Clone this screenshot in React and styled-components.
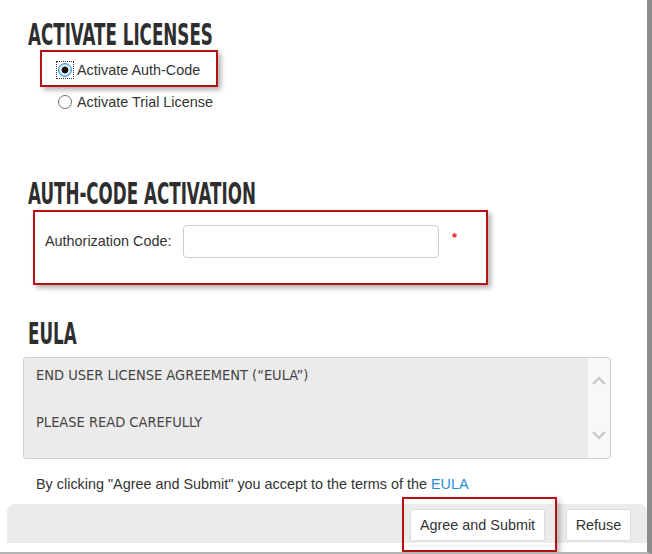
import React, { useState } from "react";
import styled, { createGlobalStyle } from "styled-components";

const GlobalStyle = createGlobalStyle`
    html, body {
        margin: 0;
        padding: 0;
        background: #ffffff;
    }
    body {
        font-family: "Liberation Sans", Arial, sans-serif;
        font-size: 14.4px;
        color: #333333;
    }
`;

const Frame = styled.div`
    box-sizing: border-box;
    width: 652px;
    height: 554px;
    border-right: 5px solid #8c8c8c;
    border-bottom: 2px solid #b4b4b4;
    background: #ffffff;
    overflow: hidden;
    display: flex;
    flex-direction: column;
`;

const Title = styled.h2`
    margin: ${(p) => p.$top || 0}px 0 0 28px;
    font-family: "Liberation Sans Narrow", "DejaVu Sans Condensed", sans-serif;
    font-weight: 700;
    font-size: 31px;
    line-height: 31px;
    height: 31px;
    color: #2e2e2e;
    text-transform: uppercase;
    white-space: nowrap;
    transform: scaleX(0.6);
    transform-origin: left center;
`;

const Highlight = styled.div`
    box-sizing: border-box;
    border: 2px solid #b80f16;
    box-shadow: 3px 3px 5px rgba(0, 0, 0, 0.3);
`;

const ModeBox = styled(Highlight)`
    width: 178px;
    height: 37px;
    margin: 0 0 0 40px;
    display: flex;
    align-items: center;
    padding: 2px 0 0 14px;
`;

const OptionRow = styled.label`
    display: flex;
    align-items: center;
    gap: 3px;
    margin: ${(p) => p.$top || 0}px 0 0 ${(p) => p.$left || 0}px;
    font-size: 14.4px;
    color: #333333;
    cursor: pointer;
`;

const RadioWrap = styled.span`
    box-sizing: border-box;
    width: 18px;
    height: 18px;
    display: flex;
    align-items: center;
    justify-content: center;
    border: 1px dotted ${(p) => (p.$focused ? "#333333" : "transparent")};
`;

const Radio = styled.input.attrs({ type: "radio" })`
    appearance: none;
    box-sizing: border-box;
    margin: 0;
    width: 14px;
    height: 14px;
    border-radius: 50%;
    border: 1px solid ${(p) => (p.checked ? "#3a95d8" : "#6f6f6f")};
    background: ${(p) =>
        p.checked
            ? "radial-gradient(circle, #111 0 3.2px, #fff 3.8px)"
            : "#fff"};
    box-shadow: ${(p) => (p.checked ? "0 0 0 1px #8cc4ee inset" : "none")};
`;

const CodeBox = styled(Highlight)`
    width: 455px;
    height: 75px;
    margin: 1px 0 0 33px;
    display: flex;
    align-items: flex-start;
    padding: 13px 0 0 10px;
`;

const FieldLabel = styled.span`
    width: 138px;
    line-height: 33px;
    font-size: 14.4px;
    color: #333333;
`;

const CodeInput = styled.input`
    box-sizing: border-box;
    width: 256px;
    height: 33px;
    border: 1px solid #cccccc;
    border-radius: 4px;
    padding: 0 8px;
    font-family: "Liberation Sans", Arial, sans-serif;
    font-size: 14px;
    outline: none;
`;

const Required = styled.span`
    margin: 6px 0 0 13px;
    color: #e0202a;
    font-size: 13px;
    font-weight: 700;
    line-height: 13px;
`;

const EulaBox = styled.div`
    box-sizing: border-box;
    width: 588px;
    height: 102px;
    margin: 8px 0 0 23px;
    display: flex;
    border: 1px solid #cfcfcf;
    border-radius: 3px;
    background: #ebebeb;
    overflow: hidden;
`;

const EulaText = styled.div`
    flex: 1;
    padding: 9px 0 0 12px;
    font-family: "Liberation Sans Narrow", "DejaVu Sans Condensed", sans-serif;
    font-size: 14.5px;
    color: #444444;

    p {
        margin: 0 0 31px 0;
        line-height: 16px;
        white-space: nowrap;
    }
`;

const ScrollTrack = styled.div`
    width: 22px;
    background: #f8f8f8;
    display: flex;
    flex-direction: column;
    align-items: center;
    justify-content: space-between;
    padding: 18px 0 18px 0;
`;

const Terms = styled.p`
    margin: 17px 0 0 36px;
    font-size: 14.4px;
    line-height: 16px;
    color: #333333;

    a {
        color: #1f8dd6;
        text-decoration: none;
    }
`;

const ActionBar = styled.div`
    box-sizing: border-box;
    height: 39px;
    margin: 12px 0 0 7px;
    padding: 0 16px 2px 0;
    background: #ebebeb;
    border-radius: 8px 8px 0 0;
    display: flex;
    align-items: flex-end;
    justify-content: flex-end;
`;

const SubmitMark = styled(Highlight)`
    margin: 0 9px -11px 0;
    padding: 10px 10px 9px 6px;
    box-shadow: 3px 3px 5px rgba(0, 0, 0, 0.25);
`;

const Button = styled.button`
    box-sizing: border-box;
    width: ${(p) => p.$w}px;
    height: 32px;
    padding: 0;
    background: #ffffff;
    border: 1px solid #dddddd;
    border-radius: 1px;
    font-family: "Liberation Sans", Arial, sans-serif;
    font-size: 14.4px;
    color: #333333;
    cursor: pointer;
`;

function Chevron({ up }) {
    return (
        <svg width="14" height="9" viewBox="0 0 14 9" aria-hidden="true">
            <path
                d={up ? "M1 8 L7 2 L13 8" : "M1 1 L7 7 L13 1"}
                fill="none"
                stroke="#c4c4c4"
                strokeWidth="2"
            />
        </svg>
    );
}

function App() {
    const [mode, setMode] = useState("auth");
    const [code, setCode] = useState("");

    return (
        <Frame>
            <GlobalStyle />
            <Title $top={19}>Activate Licenses</Title>

            <ModeBox>
                <OptionRow>
                    <RadioWrap $focused>
                        <Radio name="mode" checked={mode === "auth"} onChange={() => setMode("auth")} />
                    </RadioWrap>
                    Activate Auth-Code
                </OptionRow>
            </ModeBox>
            <OptionRow $top={6} $left={56}>
                <RadioWrap>
                    <Radio name="mode" checked={mode === "trial"} onChange={() => setMode("trial")} />
                </RadioWrap>
                Activate Trial License
            </OptionRow>

            <Title $top={67}>Auth-Code Activation</Title>
            <CodeBox>
                <FieldLabel>Authorization Code:</FieldLabel>
                <CodeInput value={code} onChange={(e) => setCode(e.target.value)} />
                <Required>*</Required>
            </CodeBox>

            <Title $top={33}>EULA</Title>
            <EulaBox>
                <EulaText>
                    <p>END USER LICENSE AGREEMENT (“EULA”)</p>
                    <p>PLEASE READ CAREFULLY</p>
                </EulaText>
                <ScrollTrack>
                    <Chevron up />
                    <Chevron />
                </ScrollTrack>
            </EulaBox>

            <Terms>
                By clicking "Agree and Submit" you accept to the terms of the <a href="#eula">EULA</a>
            </Terms>

            <ActionBar>
                <SubmitMark>
                    <Button $w={135}>Agree and Submit</Button>
                </SubmitMark>
                <Button $w={65}>Refuse</Button>
            </ActionBar>
        </Frame>
    );
}

export default App;
